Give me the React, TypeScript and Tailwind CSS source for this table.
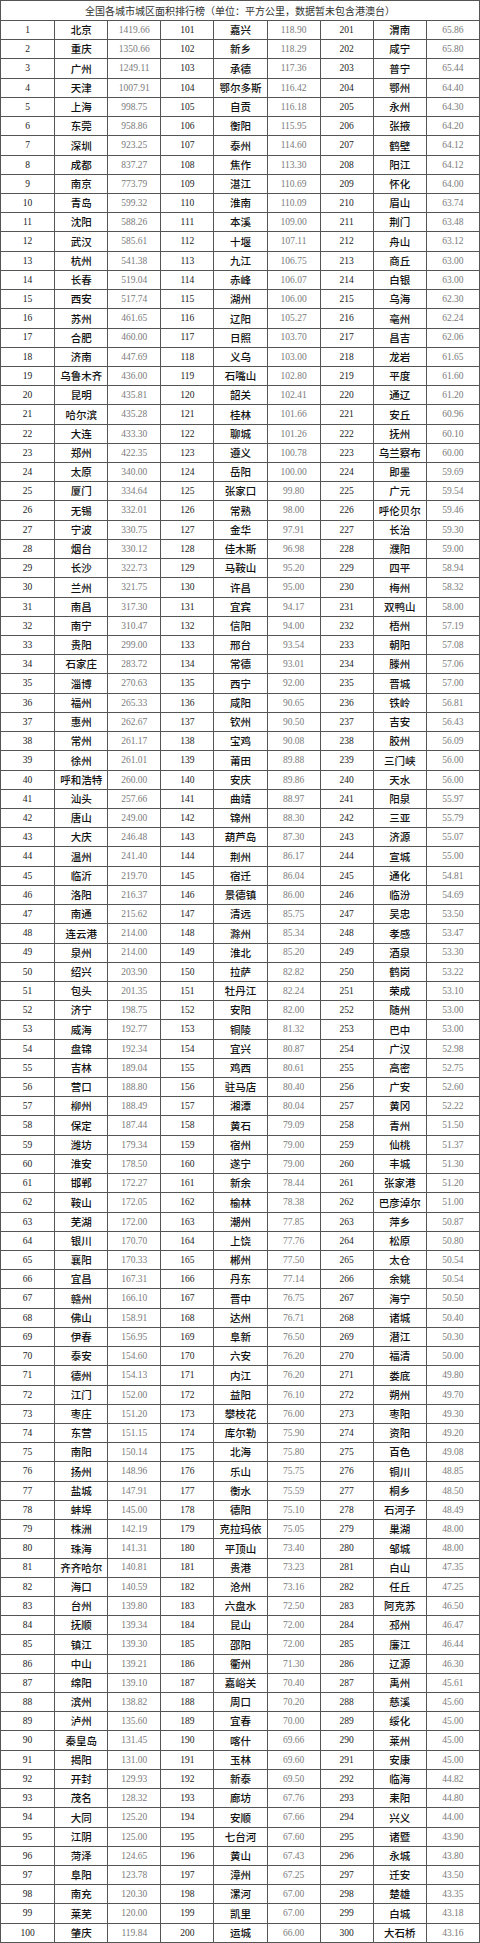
const colA = `北京 1419.66,重庆 1350.66,广州 1249.11,天津 1007.91,上海 998.75,东莞 958.86,深圳 923.25,成都 837.27,南京 773.79,青岛 599.32,沈阳 588.26,武汉 585.61,杭州 541.38,长春 519.04,西安 517.74,苏州 461.65,合肥 460.00,济南 447.69,乌鲁木齐 436.00,昆明 435.81,哈尔滨 435.28,大连 433.30,郑州 422.35,太原 340.00,厦门 334.64,无锡 332.01,宁波 330.75,烟台 330.12,长沙 322.73,兰州 321.75,南昌 317.30,南宁 310.47,贵阳 299.00,石家庄 283.72,淄博 270.63,福州 265.33,惠州 262.67,常州 261.17,徐州 261.01,呼和浩特 260.00,汕头 257.66,唐山 249.00,大庆 246.48,温州 241.40,临沂 219.70,洛阳 216.37,南通 215.62,连云港 214.00,泉州 214.00,绍兴 203.90,包头 201.35,济宁 198.75,威海 192.77,盘锦 192.34,吉林 189.04,营口 188.80,柳州 188.49,保定 187.44,潍坊 179.34,淮安 178.50,邯郸 172.27,鞍山 172.05,芜湖 172.00,银川 170.70,襄阳 170.33,宜昌 167.31,赣州 166.10,佛山 158.91,伊春 156.95,泰安 154.60,德州 154.13,江门 152.00,枣庄 151.20,东营 151.15,南阳 150.14,扬州 148.96,盐城 147.91,蚌埠 145.00,株洲 142.19,珠海 141.31,齐齐哈尔 140.81,海口 140.59,台州 139.80,抚顺 139.34,镇江 139.30,中山 139.21,绵阳 139.10,滨州 138.82,泸州 135.60,秦皇岛 131.45,揭阳 131.00,开封 129.93,茂名 128.32,大同 125.20,江阴 125.00,菏泽 124.65,阜阳 123.78,南充 120.30,莱芜 120.00,肇庆 119.84`;

const colB = `嘉兴 118.90,新乡 118.29,承德 117.36,鄂尔多斯 116.42,自贡 116.18,衡阳 115.95,泰州 114.60,焦作 113.30,湛江 110.69,淮南 110.09,本溪 109.00,十堰 107.11,九江 106.75,赤峰 106.07,湖州 106.00,辽阳 105.27,日照 103.70,义乌 103.00,石嘴山 102.80,韶关 102.41,桂林 101.66,聊城 101.26,遵义 100.78,岳阳 100.00,张家口 99.80,常熟 98.00,金华 97.91,佳木斯 96.98,马鞍山 95.20,许昌 95.00,宜宾 94.17,信阳 94.00,邢台 93.54,常德 93.01,西宁 92.00,咸阳 90.65,钦州 90.50,宝鸡 90.08,莆田 89.88,安庆 89.86,曲靖 88.97,锦州 88.30,葫芦岛 87.30,荆州 86.17,宿迁 86.04,景德镇 86.00,清远 85.75,滁州 85.34,淮北 85.20,拉萨 82.82,牡丹江 82.24,安阳 82.00,铜陵 81.32,宜兴 80.87,鸡西 80.61,驻马店 80.40,湘潭 80.04,黄石 79.09,宿州 79.00,遂宁 79.00,新余 78.44,榆林 78.38,潮州 77.85,上饶 77.76,郴州 77.50,丹东 77.14,晋中 76.75,达州 76.71,阜新 76.50,六安 76.20,内江 76.20,益阳 76.10,攀枝花 76.00,库尔勒 75.90,北海 75.80,乐山 75.75,衡水 75.59,德阳 75.10,克拉玛依 75.05,平顶山 73.40,贵港 73.23,沧州 73.16,六盘水 72.50,昆山 72.00,邵阳 72.00,衢州 71.30,嘉峪关 70.40,周口 70.20,宜春 70.00,喀什 69.66,玉林 69.60,新泰 69.50,廊坊 67.76,安顺 67.66,七台河 67.60,黄山 67.43,漳州 67.25,漯河 67.00,凯里 67.00,运城 66.00`;

const colC = `渭南 65.86,咸宁 65.80,普宁 65.44,鄂州 64.40,永州 64.30,张掖 64.20,鹤壁 64.12,阳江 64.12,怀化 64.00,眉山 63.74,荆门 63.48,舟山 63.12,商丘 63.00,白银 63.00,乌海 62.30,亳州 62.24,昌吉 62.06,龙岩 61.65,平度 61.60,通辽 61.20,安丘 60.96,抚州 60.10,乌兰察布 60.00,即墨 59.69,广元 59.54,呼伦贝尔 59.46,长治 59.30,濮阳 59.00,四平 58.94,梅州 58.32,双鸭山 58.00,梧州 57.19,朝阳 57.08,滕州 57.06,晋城 57.00,铁岭 56.81,吉安 56.43,胶州 56.09,三门峡 56.00,天水 56.00,阳泉 55.97,三亚 55.79,济源 55.07,宣城 55.00,通化 54.81,临汾 54.69,吴忠 53.50,孝感 53.47,酒泉 53.30,鹤岗 53.22,荣成 53.10,随州 53.00,巴中 53.00,广汉 52.98,高密 52.75,广安 52.60,黄冈 52.22,青州 51.50,仙桃 51.37,丰城 51.30,张家港 51.20,巴彦淖尔 51.00,萍乡 50.87,松原 50.80,太仓 50.54,余姚 50.54,海宁 50.50,诸城 50.40,潜江 50.30,福清 50.00,娄底 49.80,朔州 49.70,枣阳 49.30,资阳 49.20,百色 49.08,铜川 48.85,桐乡 48.50,石河子 48.49,巢湖 48.00,邹城 48.00,白山 47.35,任丘 47.25,阿克苏 46.50,邳州 46.47,廉江 46.44,辽源 46.30,禹州 45.61,慈溪 45.60,绥化 45.00,莱州 45.00,安康 45.00,临海 44.82,耒阳 44.80,兴义 44.00,诸暨 43.90,永城 43.80,迁安 43.50,楚雄 43.35,白城 43.18,大石桥 43.16`;

const parse = (s: string) => s.split(",").map((x) => x.split(" "));
const cols = [parse(colA), parse(colB), parse(colC)];

const numFont = "font-['Liberation_Serif',serif]";
const cjkFont = "font-['Noto_Sans_CJK_SC',sans-serif]";

export default function App() {
  return (
    <div className="w-[480px] h-[1943px] bg-white flex flex-col border border-[#555] overflow-hidden">
      <div className={`h-[19px] shrink-0 flex items-center justify-center text-[10px] text-[#333] ${cjkFont}`}>
        全国各城市城区面积排行榜（单位：平方公里，数据暂未包含港澳台）
      </div>
      {Array.from({ length: 100 }, (_, i) => (
        <div key={i} className="flex-1 min-h-0 grid grid-cols-9 border-t border-[#555]">
          {cols.map((col, c) => (
            <div key={c} className="contents">
              <div className={`flex items-center justify-center text-[9.5px] text-[#222] ${numFont} ${c > 0 ? "border-l border-[#555]" : ""}`}>
                {i + 1 + c * 100}
              </div>
              <div className={`flex items-center justify-center border-l border-[#555] text-[10.5px] font-medium text-[#111] whitespace-nowrap ${cjkFont}`}>
                {col[i][0]}
              </div>
              <div className={`flex items-center justify-center border-l border-[#555] text-[9.5px] text-[#7a7a7a] ${numFont}`}>
                {col[i][1]}
              </div>
            </div>
          ))}
        </div>
      ))}
    </div>
  );
}
